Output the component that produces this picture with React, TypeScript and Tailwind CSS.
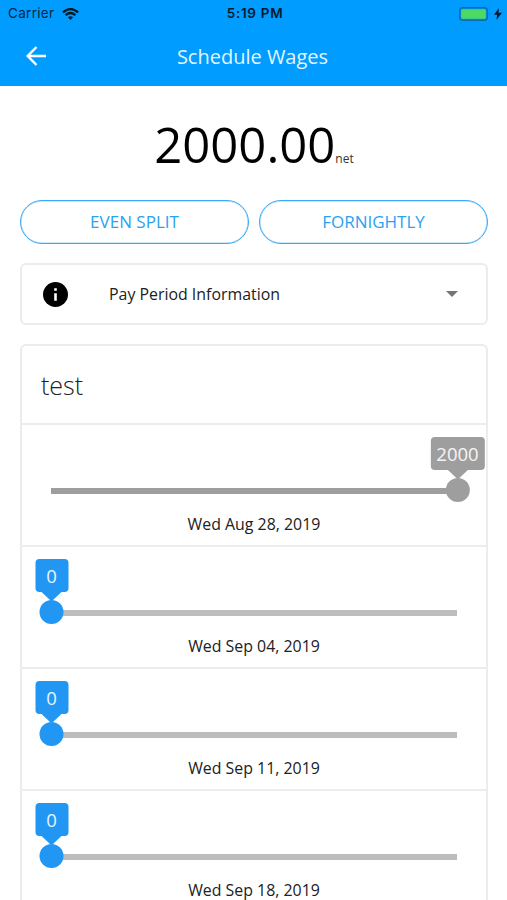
import React from 'react';

type Slot = {
  id: string;
  date: string;
  amount: number;
  locked?: boolean;
};

const TOTAL = 2000;

const slots: Slot[] = [
  { id: "aug28", date: "Wed Aug 28, 2019", amount: 2000, locked: true },
  { id: "sep04", date: "Wed Sep 04, 2019", amount: 0 },
  { id: "sep11", date: "Wed Sep 11, 2019", amount: 0 },
  { id: "sep18", date: "Wed Sep 18, 2019", amount: 0 },
];

const StatusBar = () => (
  <div className="flex h-[27px] items-center justify-between pl-2 pr-[5px] font-['Inter','Liberation_Sans',sans-serif] text-[13.5px] text-[#06263d]">
    <div className="flex flex-1 items-center gap-[7px]">
      <span className="w-[47px] whitespace-nowrap tracking-[0.3px]">Carrier</span>
      <svg className="h-3 w-[17px]" viewBox="0 0 17 12">
        <path d="M8.5 12 L5.9 9.3 Q8.5 7 11.1 9.3 Z" fill="#061a29" />
        <path d="M3.6 7.1 Q8.5 2.9 13.4 7.1" fill="none" stroke="#061a29" strokeWidth="2.3" />
        <path d="M0.9 4.3 Q8.5 -2.2 16.1 4.3" fill="none" stroke="#061a29" strokeWidth="2.3" />
      </svg>
    </div>
    <span className="text-[13.5px] font-semibold tracking-[0.7px] text-[#061a29]">5:19 PM</span>
    <div className="flex flex-1 items-center justify-end gap-[3px]">
      <svg className="h-[14px] w-8" viewBox="0 0 32 14">
        <rect x="0.75" y="0.75" width="27.5" height="12.5" rx="3" fill="none" stroke="#0b6bb0" strokeWidth="1.5" />
        <rect x="2.2" y="2.2" width="24.6" height="9.6" rx="1.2" fill="#4cd964" />
        <path d="M30 5 Q31.5 7 30 9 Z" fill="#0b6bb0" />
      </svg>
      <svg className="h-3 w-2" viewBox="0 0 8 12">
        <path d="M5 0 L0 6.8 H3.2 L2.4 12 L8 4.8 H4.5 Z" fill="#061a29" />
      </svg>
    </div>
  </div>
);

const SlotRow = ({ slot }: { slot: Slot }) => {
  const fill = slot.locked ? "bg-[#9e9e9e]" : "bg-[#2196f3]";
  const arrow = slot.locked ? "fill-[#9e9e9e]" : "fill-[#2196f3]";

  return (
    <div className="h-[122px] border-t-2 border-[#ececec] px-[29px] pt-[63px]">
      <div className={`relative h-1.5 ${slot.locked ? "bg-[#9e9e9e]" : "bg-[#bdbdbd]"}`}>
        {/* Thumb with its value bubble */}
        <div
          className="absolute bottom-[-8px] ml-[0.5px] flex -translate-x-1/2 flex-col items-center"
          style={{ left: `${(slot.amount / TOTAL) * 100}%` }}
        >
          <div className={`flex h-[33px] min-w-[33px] items-center justify-center rounded px-1.5 pt-px text-[18.5px] text-white/90 ${fill}`}>
            {slot.amount}
          </div>
          <svg className={`h-2 w-5 ${arrow}`} viewBox="0 0 20 8">
            <path d="M0 0 H20 L11.5 8 H8.5 Z" />
          </svg>
          <div className={`size-6 rounded-full ${fill}`} />
        </div>
      </div>
      <p className="mt-[19px] text-center text-[15.9px] leading-[22px] text-[#212121]">{slot.date}</p>
    </div>
  );
};

export default function App() {
  return (
    <div className="min-h-[900px] w-full bg-white font-['Open_Sans','Noto_Sans',sans-serif]">
      <header className="h-[86px] bg-[#009cff]">
        <StatusBar />
        <div className="grid h-[58px] grid-cols-[59px_1fr_61px] items-center">
          <svg className="ml-[26px] size-5" viewBox="0 0 20 20" fill="none" stroke="#fff" strokeWidth="2.4">
            <path d="M20 10 H2 M10.5 1 L1.7 10 L10.5 19" />
          </svg>
          <h1 className="pt-px text-center text-xl text-[#e2f5ff]">Schedule Wages</h1>
        </div>
      </header>

      <main className="pl-5 pr-[19px]">
        <div className="flex h-[114px] items-baseline justify-center pt-[24px] text-black">
          <span className="text-[49px] leading-[68px]">2000.00</span>
          <span className="text-xs text-[#333]">net</span>
        </div>

        <div className="grid grid-cols-2 gap-2.5">
          <button className="h-11 rounded-full border-[1.5px] border-[#39a9f5] text-[17px] text-[#2ba1f2] ring-[0.5px] ring-inset ring-[#39a9f5]/50">EVEN SPLIT</button>
          <button className="h-11 rounded-full border-[1.5px] border-[#39a9f5] text-[17px] text-[#2ba1f2] ring-[0.5px] ring-inset ring-[#39a9f5]/50">FORNIGHTLY</button>
        </div>

        <div className="mt-[19px] flex h-[62px] items-center rounded-md border-2 border-[#ececec] pl-[21px] pr-[28px]">
          <svg className="size-[25px]" viewBox="0 0 25 25">
            <circle cx="12.5" cy="12.5" r="12.5" fill="#000" />
            <path d="M11.2 6.3 H13.8 V8.8 H11.2 Z M11.2 11.2 H13.8 V18.8 H11.2 Z" fill="#fff" />
          </svg>
          <span className="ml-[41px] flex-1 pt-0.5 text-[15.9px] text-[#212121]">Pay Period Information</span>
          <svg className="h-1.5 w-3" viewBox="0 0 12 6">
            <path d="M0 0 H12 L6 6 Z" fill="#757575" />
          </svg>
        </div>

        <section className="mt-[19px] rounded-t-md border-2 border-b-0 border-[#ececec]">
          <h2 className="flex h-[77px] items-center pl-[19px] pt-0.5 text-[25px] font-light text-[#212121]">test</h2>
          {slots.map((slot) => (
            <SlotRow key={slot.id} slot={slot} />
          ))}
        </section>
      </main>
    </div>
  );
}
